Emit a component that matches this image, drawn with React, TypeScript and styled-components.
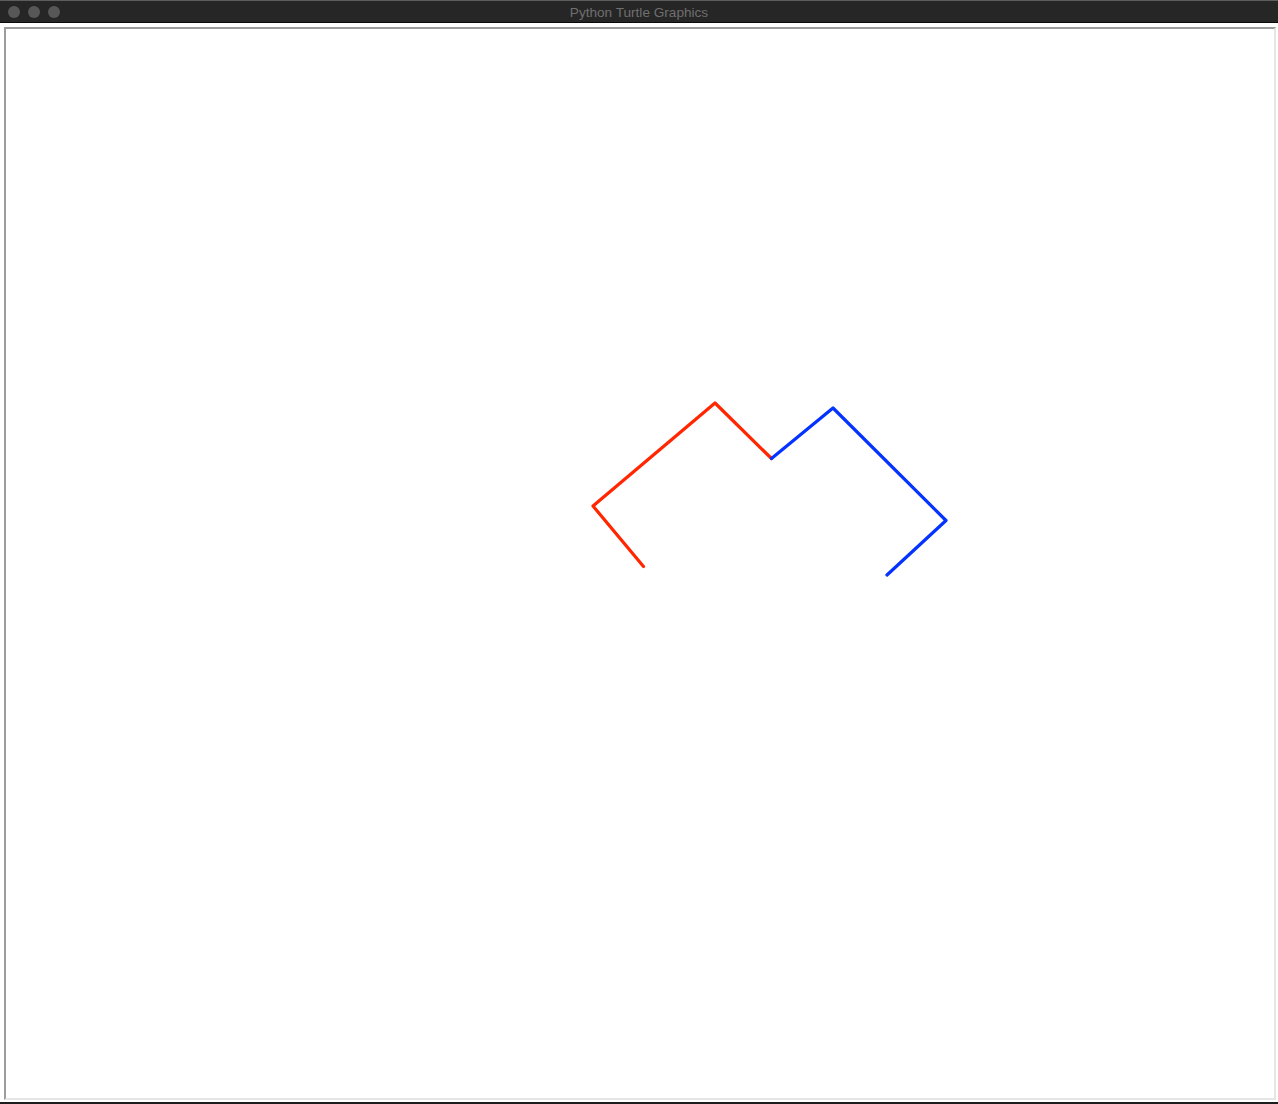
import React from "react";
import styled, { createGlobalStyle } from "styled-components";

const Global = createGlobalStyle`
  html, body { margin: 0; padding: 0; background: #ffffff; }
  body { font-family: "Liberation Sans", Arial, sans-serif; }
`;

const Window = styled.div`
  width: 1278px;
  height: 1104px;
  box-sizing: border-box;
  display: flex;
  flex-direction: column;
  background: #ffffff;
  border-bottom: 2px solid #1c1c1c;
  overflow: hidden;
`;

const TitleBar = styled.div`
  position: relative;
  height: 23px;
  flex: 0 0 23px;
  box-sizing: border-box;
  background: #262626;
  border-top: 1px solid #5e5e5e;
  border-bottom: 1px solid #0a0a0a;
  display: flex;
  align-items: center;
  justify-content: center;
`;

const Lights = styled.div`
  position: absolute;
  left: 8px;
  top: 5px;
  display: flex;
  gap: 8px;
`;

const Light = styled.span`
  width: 12px;
  height: 12px;
  border-radius: 50%;
  background: #575757;
`;

const Title = styled.span`
  font-family: "Liberation Sans", Arial, sans-serif;
  font-size: 13.6px;
  color: #6f6f6f;
  line-height: 20px;
  padding-top: 2px;
`;

const Body = styled.div`
  flex: 1;
  padding: 4px 2px 2px 4px;
  display: flex;
  background: #ffffff;
`;

const CanvasFrame = styled.div`
  flex: 1;
  box-sizing: border-box;
  border-top: 2px solid #9c9c9c;
  border-left: 2px solid #9c9c9c;
  border-right: 2px solid #e6e6e6;
  border-bottom: 2px solid #e6e6e6;
  background: #ffffff;
  display: flex;
`;

const Drawing = styled.svg`
  flex: 1;
  display: block;
`;

const red: [number, number][] = [
  [643.5, 566.5],
  [593, 506],
  [715, 403],
  [771.5, 458.5],
];
const blue: [number, number][] = [
  [771.5, 458.5],
  [833, 408],
  [946, 520.5],
  [887, 575],
];

const pts = (p: [number, number][]) => p.map(([x, y]) => `${x},${y}`).join(" ");

export default function App() {
  return (
    <>
      <Global />
      <Window>
        <TitleBar>
          <Lights>
            <Light />
            <Light />
            <Light />
          </Lights>
          <Title>Python Turtle Graphics</Title>
        </TitleBar>
        <Body>
          <CanvasFrame>
            <Drawing width="100%" height="100%">
              <g transform="translate(-6,-29)">
                <polyline
                  points={pts(red)}
                  fill="none"
                  stroke="#ff2600"
                  strokeWidth={3.2}
                  strokeLinejoin="round"
                  strokeLinecap="round"
                />
                <polyline
                  points={pts(blue)}
                  fill="none"
                  stroke="#0433ff"
                  strokeWidth={3.2}
                  strokeLinejoin="round"
                  strokeLinecap="round"
                />
              </g>
            </Drawing>
          </CanvasFrame>
        </Body>
      </Window>
    </>
  );
}
